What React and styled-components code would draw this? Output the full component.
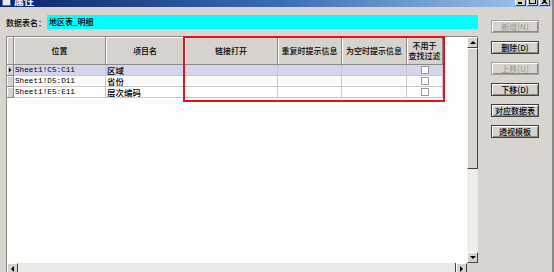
import React from 'react';
import styled, { createGlobalStyle } from 'styled-components';

const GlobalStyle = createGlobalStyle`
  html, body {
    margin: 0;
    padding: 0;
    width: 554px;
    height: 272px;
    overflow: hidden;
    background: #d8d5d0;
  }
  * { box-sizing: border-box; }
`;

const CJK = `"Noto Sans CJK SC", "Noto Sans", sans-serif`;

const Window = styled.div`
  width: 554px;
  height: 290px;
  margin-top: -11px;
  display: flex;
  flex-direction: column;
  background: #d8d5d0;
  border-right: 2px solid #8a8884;
  font-family: ${CJK};
  font-size: 8px;
  font-weight: 500;
  color: #000;
`;

const TitleBar = styled.div`
  height: 18px;
  flex: none;
  display: flex;
  align-items: center;
  padding: 0 2px;
  gap: 3px;
  background: linear-gradient(90deg, #0a246a 0%, #3a6ab8 50%, #a6caf0 100%);
`;

const TitleIcon = styled.div`
  width: 9px;
  height: 9px;
  margin-top: 6px;
  background: #e8e8f0;
  border: 1px solid #5a6a9a;
`;

const TitleText = styled.span`
  flex: 1;
  color: #fff;
  font-weight: bold;
  font-size: 10px;
  margin-top: 4px;
`;

const WinButtons = styled.div`
  display: flex;
  gap: 1px;
  margin-top: 5px;
`;

const WinButton = styled.div`
  width: 11px;
  height: 10px;
  background: #d4d0c8;
  border: 1px solid;
  border-color: #fff #404040 #404040 #fff;
  display: flex;
  align-items: center;
  justify-content: center;
`;

const Body = styled.div`
  flex: 1;
  display: flex;
  min-height: 0;
`;

const Main = styled.div`
  width: 478px;
  padding-left: 6px;
  display: flex;
  flex-direction: column;
`;

const NameRow = styled.div`
  display: flex;
  align-items: center;
  margin-top: 8px;
  height: 14px;
`;

const Label = styled.span`
  width: 41px;
  font-size: 8px;
`;

const NameInput = styled.div`
  flex: 1;
  height: 14px;
  background: #00ffff;
  padding-left: 2px;
  line-height: 14px;
  font-size: 8px;
`;

const GridFrame = styled.div`
  margin-top: 7px;
  flex: 1;
  display: flex;
  flex-direction: column;
  border-top: 1px solid #8c8a86;
  border-left: 1px solid #8c8a86;
`;

const GridBody = styled.div`
  height: 226px;
  display: flex;
`;

const Table = styled.div`
  position: relative;
  flex: 1;
  background: #fff;
  display: grid;
  grid-template-columns: 7px 92px 79px 93px 64px 65px 36px 1fr;
  grid-template-rows: 28px repeat(3, 11px) 1fr;
`;

const HeadCell = styled.div`
  background: #d6d3ce;
  border-right: 1px solid #8c8a86;
  border-bottom: 1px solid #8c8a86;
  box-shadow: inset 1px 1px #fff;
  display: flex;
  align-items: center;
  justify-content: center;
  text-align: center;
  font-size: 8px;
  line-height: 10px;
  white-space: pre-line;
`;

const HeadBlank = styled.div`
  background: #fff;
`;

const Indicator = styled.div`
  background: #d6d3ce;
  border-right: 1px solid #8c8a86;
  border-bottom: 1px solid #8c8a86;
  box-shadow: inset 1px 1px #fff;
  display: flex;
  align-items: center;
  padding-left: 1px;
`;

const Cell = styled.div`
  background: ${p => (p.selected ? '#d5d5ee' : '#fff')};
  border-right: 1px solid #c8c8c8;
  border-bottom: 1px solid #c8c8c8;
  display: flex;
  align-items: center;
  justify-content: ${p => (p.center ? 'center' : 'flex-start')};
  padding-left: ${p => (p.center ? 0 : 1)}px;
  font-family: ${p => (p.mono ? `"Liberation Mono", monospace` : CJK)};
  font-size: ${p => (p.mono ? '7.7px' : '8.5px')};
  white-space: nowrap;
  overflow: hidden;
`;

const RowRest = styled.div`
  background: #fff;
`;

const Check = styled.div`
  width: 8px;
  height: 8px;
  background: #fff;
  border: 1px solid #9a9a9a;
`;

const Highlight = styled.div`
  position: absolute;
  left: 176px;
  top: -1px;
  width: 262px;
  height: 66px;
  border: 2px solid #e3121b;
  pointer-events: none;
`;

const VScroll = styled.div`
  width: 11px;
  display: flex;
  flex-direction: column;
  background: #efedea;
`;

const ArrowBtn = styled.div`
  width: 11px;
  height: 11px;
  flex: none;
  background: #d6d3ce;
  border: 1px solid;
  border-color: #fff #404040 #404040 #fff;
  display: flex;
  align-items: center;
  justify-content: center;
`;

const VThumb = styled.div`
  height: 121px;
  background: #d6d3ce;
  border: 1px solid;
  border-color: #fff #404040 #404040 #fff;
`;

const Track = styled.div`
  flex: 1;
`;

const HScroll = styled.div`
  height: 11px;
  display: flex;
  background: #efedea;
`;

const HThumb = styled.div`
  width: 438px;
  background: #ebe9e6;
  border-right: 1px solid #404040;
`;

const Corner = styled.div`
  width: 11px;
  background: #d8d5d0;
`;

const Side = styled.div`
  flex: 1;
  padding: 13px 0 0 13px;
  display: flex;
  flex-direction: column;
  gap: 8px;
`;

const Button = styled.div`
  width: 48px;
  height: 13px;
  background: #d6d3ce;
  border: 1px solid #404040;
  box-shadow: inset 1px 1px #fff, inset -1px -1px #8c8a86;
  display: flex;
  align-items: center;
  justify-content: center;
  font-size: 8px;
  color: ${p => (p.disabled ? '#a4a19c' : '#000')};
  border-color: ${p => (p.disabled ? '#a4a19c' : '#404040')};
  white-space: nowrap;
`;

const Tri = ({ dir }) => {
  const pts = {
    up: '0,4 3,1 6,4',
    down: '0,1 3,4 6,1',
    left: '4,0 1,3 4,6',
    right: '1,0 4,3 1,6',
  }[dir];
  return (
    <svg width="6" height="6" viewBox="0 0 6 6">
      <polygon points={pts} fill="#000" />
    </svg>
  );
};

const WinGlyph = ({ kind }) => (
  <svg width="7" height="6" viewBox="0 0 7 6">
    {kind === 'min' && <rect x="1" y="4" width="4" height="2" fill="#000" />}
    {kind === 'max' && <rect x="0.5" y="0.5" width="6" height="5" fill="none" stroke="#000" strokeWidth="1" />}
    {kind === 'close' && <path d="M1 0 L6 6 M6 0 L1 6" stroke="#000" strokeWidth="1.4" />}
  </svg>
);

const columns = ['位置', '项目名', '链接打开', '重复时提示信息', '为空时提示信息', '不用于\n查找过滤'];

const rows = [
  { pos: 'Sheet1!C5:C11', name: '区域' },
  { pos: 'Sheet1!D5:D11', name: '省份' },
  { pos: 'Sheet1!E5:E11', name: '层次编码' },
];

const buttons = [
  { label: '新增(N)', disabled: true },
  { label: '删除(D)' },
  { label: '上移(U)', disabled: true },
  { label: '下移(D)' },
  { label: '对应数据表' },
  { label: '透视模板' },
];

export default function App() {
  return (
    <>
      <GlobalStyle />
      <Window>
        <TitleBar>
          <TitleIcon />
          <TitleText>属性</TitleText>
          <WinButtons>
            <WinButton><WinGlyph kind="min" /></WinButton>
            <WinButton><WinGlyph kind="max" /></WinButton>
            <WinButton><WinGlyph kind="close" /></WinButton>
          </WinButtons>
        </TitleBar>
        <Body>
          <Main>
            <NameRow>
              <Label>数据表名：</Label>
              <NameInput>地区表_明细</NameInput>
            </NameRow>
            <GridFrame>
              <GridBody>
                <Table>
                  <HeadCell />
                  {columns.map(c => (
                    <HeadCell key={c}>{c}</HeadCell>
                  ))}
                  <HeadBlank />
                  {rows.map((r, i) => (
                    <React.Fragment key={r.pos}>
                      <Indicator>{i === 0 && <Tri dir="right" />}</Indicator>
                      <Cell mono selected={i === 0}>{r.pos}</Cell>
                      <Cell selected={i === 0}>{r.name}</Cell>
                      <Cell selected={i === 0} />
                      <Cell selected={i === 0} />
                      <Cell selected={i === 0} />
                      <Cell center selected={i === 0}><Check /></Cell>
                      <RowRest />
                    </React.Fragment>
                  ))}
                  <Highlight />
                </Table>
                <VScroll>
                  <ArrowBtn><Tri dir="up" /></ArrowBtn>
                  <VThumb />
                  <Track />
                  <ArrowBtn><Tri dir="down" /></ArrowBtn>
                </VScroll>
              </GridBody>
              <HScroll>
                <ArrowBtn><Tri dir="left" /></ArrowBtn>
                <HThumb />
                <Track />
                <ArrowBtn><Tri dir="right" /></ArrowBtn>
                <Corner />
              </HScroll>
            </GridFrame>
          </Main>
          <Side>
            {buttons.map(b => (
              <Button key={b.label} disabled={b.disabled}>{b.label}</Button>
            ))}
          </Side>
        </Body>
      </Window>
    </>
  );
}
